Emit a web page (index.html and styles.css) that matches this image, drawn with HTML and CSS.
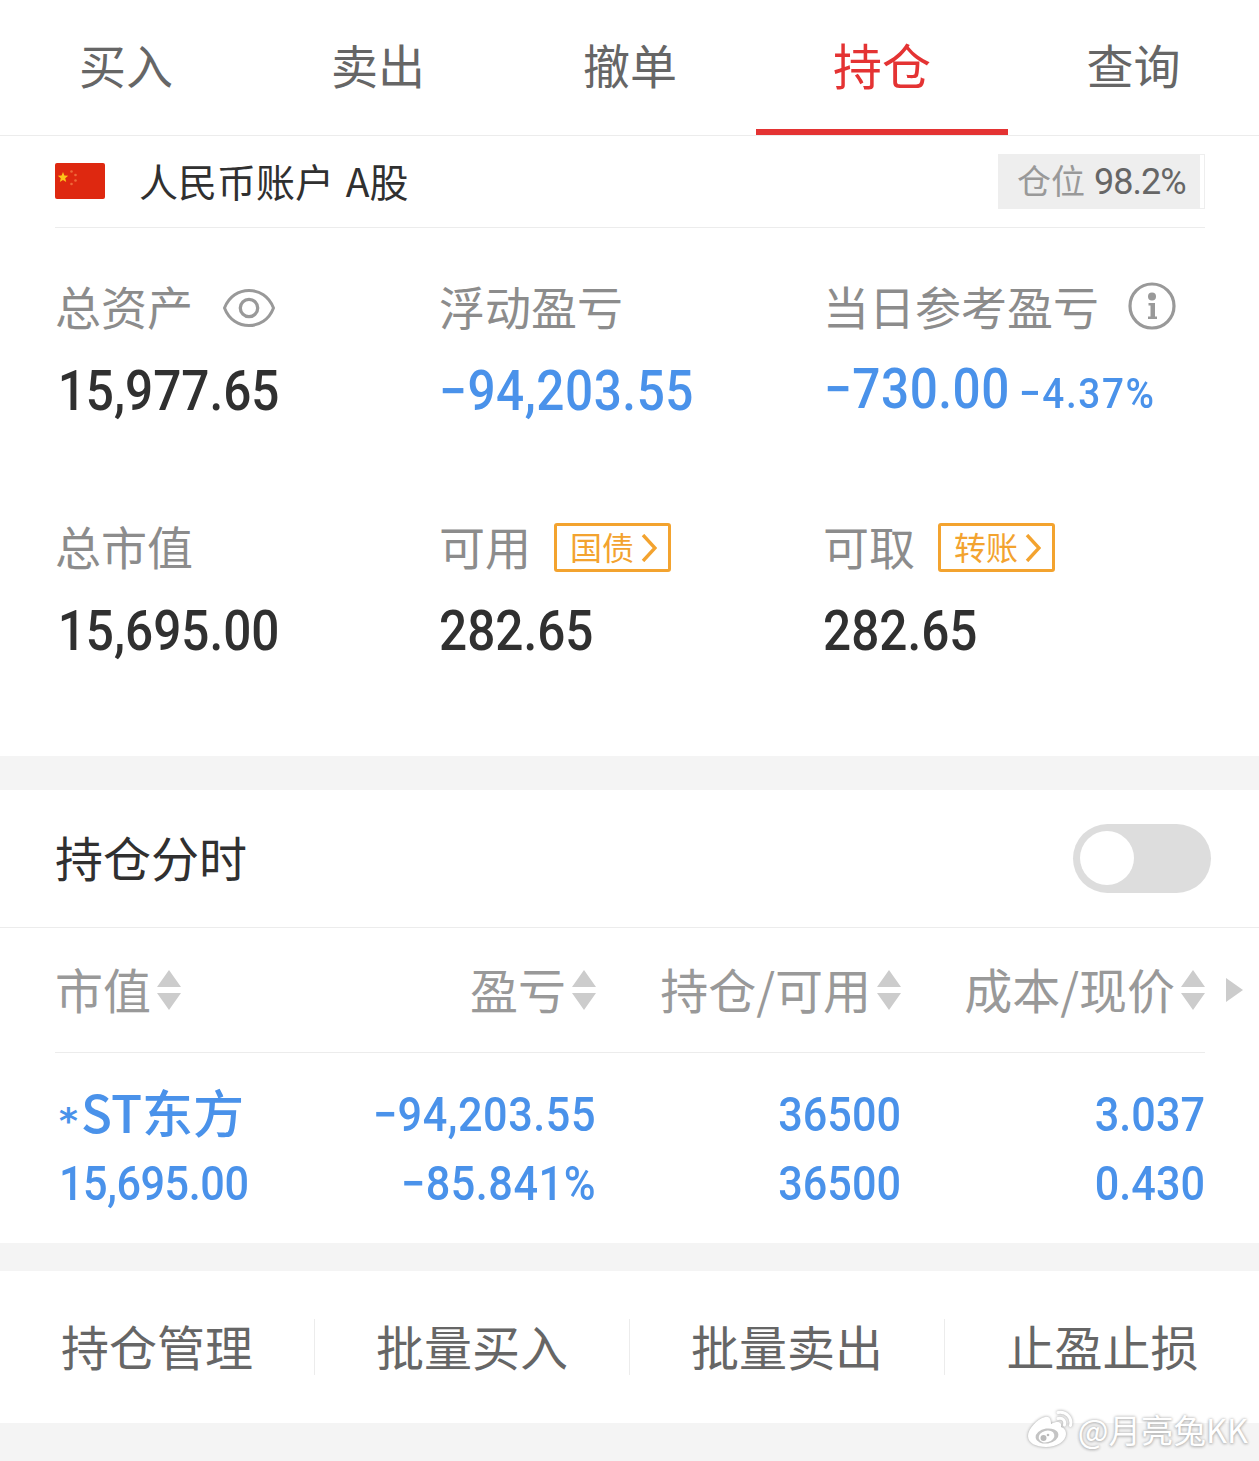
FILE: index.html
```html
<!DOCTYPE html>
<html lang="zh-CN">
<head>
    <meta charset="UTF-8">
    <title>持仓</title>
    <link rel="stylesheet" href="styles.css">
</head>
<body>
    <nav class="tabs">
        <a class="tab">买入</a>
        <a class="tab">卖出</a>
        <a class="tab">撤单</a>
        <a class="tab active">持仓</a>
        <a class="tab">查询</a>
    </nav>

    <section class="account">
        <svg class="flag" viewBox="0 0 50 36">
            <rect width="50" height="36" rx="2" fill="#de2810"/>
            <path d="M8 9l1.400 3.600 3.800.2-3 2.400 1 3.800L8 17l-3.200 2 1-3.800-3-2.400 3.800-.2z" fill="#fcc419"/>
            <g fill="#ee6a3a">
                <circle cx="16.500" cy="8.500" r="1.300"/>
                <circle cx="20.500" cy="12" r="1.300"/>
                <circle cx="20.500" cy="17.500" r="1.300"/>
                <circle cx="16.500" cy="21" r="1.300"/>
            </g>
        </svg>
        <span class="account-name">人民币账户 A股</span>
        <div class="position">
            <div class="position-fill"><span>仓位</span><b>98.2%</b></div>
        </div>
    </section>

    <section class="assets">
        <article class="asset">
            <h2>总资产
                <svg class="eye" viewBox="0 0 54 40" fill="none" stroke="#999">
                    <path d="M2.500 20C7 8 17 2.500 27 2.500S47 8 51.500 20C47 32 37 37.500 27 37.500S7 32 2.500 20z" stroke-width="3" stroke-linejoin="round"/>
                    <circle cx="27" cy="20" r="8.700" stroke-width="3.300"/>
                </svg>
            </h2>
            <p class="num indent">15,977.65</p>
        </article>
        <article class="asset">
            <h2>浮动盈亏</h2>
            <p class="num blue">−94,203.55</p>
        </article>
        <article class="asset">
            <h2>当日参考盈亏
                <svg class="info" viewBox="0 0 48 48">
                    <circle cx="24" cy="24" r="22" fill="none" stroke="#999" stroke-width="3.200"/>
                    <circle cx="24" cy="14.500" r="4" fill="#999"/>
                    <path d="M20.500 21h6.500v13.500h2v2.500h-9v-2.500h2.500v-11h-2z" fill="#999"/>
                </svg>
            </h2>
            <p class="num blue today">−730.00<small>−4.37%</small></p>
        </article>
        <article class="asset">
            <h2>总市值</h2>
            <p class="num indent">15,695.00</p>
        </article>
        <article class="asset">
            <h2>可用
                <button class="tag">国债<svg viewBox="0 0 16 28"><path d="M2 1l12 13L2 27"/></svg></button>
            </h2>
            <p class="num">282.65</p>
        </article>
        <article class="asset">
            <h2>可取
                <button class="tag">转账<svg viewBox="0 0 16 28"><path d="M2 1l12 13L2 27"/></svg></button>
            </h2>
            <p class="num">282.65</p>
        </article>
    </section>

    <section class="timeline">
        <span>持仓分时</span>
        <div class="switch"></div>
    </section>

    <section class="holdings">
        <div class="row head">
            <div>市值<svg class="sort" viewBox="0 0 24 40"><path d="M12 0l12 17H0zM0 23h24L12 40z"/></svg></div>
            <div>盈亏<svg class="sort" viewBox="0 0 24 40"><path d="M12 0l12 17H0zM0 23h24L12 40z"/></svg></div>
            <div>持仓/可用<svg class="sort" viewBox="0 0 24 40"><path d="M12 0l12 17H0zM0 23h24L12 40z"/></svg></div>
            <div>成本/现价<svg class="sort" viewBox="0 0 24 40"><path d="M12 0l12 17H0zM0 23h24L12 40z"/></svg></div>
            <svg class="more" viewBox="0 0 17 24"><path d="M0 0l17 12L0 24z"/></svg>
        </div>
        <div class="row stock">
            <div>
                <p class="name"><span class="star">*</span>ST东方</p>
                <p>15,695.00</p>
            </div>
            <div>
                <p class="loss">−94,203.55</p>
                <p class="loss">−85.841%</p>
            </div>
            <div>
                <p>36500</p>
                <p>36500</p>
            </div>
            <div>
                <p>3.037</p>
                <p>0.430</p>
            </div>
        </div>
    </section>

    <section class="actions">
        <a>持仓管理</a>
        <a>批量买入</a>
        <a>批量卖出</a>
        <a>止盈止损</a>
    </section>

    <footer class="bottom">
        <div class="watermark">
            <svg viewBox="0 0 46 38">
                <path d="M18 7C10 9 1 19 1 26c0 7 8 11 18 11 11 0 20-6 20-13 0-4-2-6-5-7 1-4-2-7-10-3 0-4-1-8-6-7z" fill="#fff"/>
                <ellipse cx="20" cy="26" rx="11.500" ry="7.500" fill="#c4c4c4" transform="rotate(-8 20 26)"/>
                <ellipse cx="19.500" cy="26.500" rx="8" ry="5.800" fill="#fff" transform="rotate(-15 19.500 26.500)"/>
                <circle cx="16.500" cy="28" r="3" fill="#bbb"/>
                <circle cx="21" cy="25" r="1.300" fill="#bbb"/>
                <path d="M31 8.500c5-1 7.500 2 6.500 6.500M31 2.500c8-1.500 14.500 5 12.500 13" fill="none" stroke="#fff" stroke-width="3" stroke-linecap="round"/>
            </svg>
            <span>@月亮兔KK</span>
        </div>
    </footer>
</body>
</html>
```
FILE: styles.css
```css
* {
    box-sizing: border-box;
}
body {
    margin: 0;
    background: #fff;
    color: #303030;
    font-family: "Noto Sans CJK SC", sans-serif;
}
h2, p {
    margin: 0;
    font-weight: 400;
}
svg {
    display: block;
    flex: none;
}

.tabs {
    display: grid;
    grid-template-columns: repeat(4, 252px) 1fr;
    height: 136px;
    border-bottom: 1px solid #ececec;
}
.tab {
    height: 135px;
    line-height: 127px;
    text-align: center;
    font-size: 47px;
    color: #666;
}
.tab.active {
    font-size: 49px;
    color: #e43333;
    border-bottom: 6px solid #e43333;
}

.account {
    display: flex;
    align-items: center;
    height: 92px;
    margin: 0 54px 0 55px;
    border-bottom: 1px solid #ececec;
}
.flag {
    width: 50px;
    height: 36px;
    margin-bottom: 2px;
}
.account-name {
    flex: 1;
    margin-left: 34px;
    padding-bottom: 3px;
    font-size: 39px;
    line-height: 56px;
    word-spacing: 3px;
}
.position {
    width: 207px;
    height: 55px;
    border: 1px solid #eee;
}
.position-fill {
    display: flex;
    align-items: center;
    width: 201px;
    height: 53px;
    padding-left: 18px;
    background: #eee;
    font-size: 34px;
    color: #999;
}
.position-fill span {
    padding-bottom: 4px;
}
.position-fill b {
    margin-left: 9px;
    font: 400 36px Roboto, sans-serif;
    letter-spacing: -1px;
    color: #666;
}

.assets {
    display: grid;
    grid-template-columns: repeat(3, 384px);
    grid-auto-rows: 240px;
    height: 528px;
    padding: 40px 0 0 55px;
}
.asset h2 {
    display: flex;
    align-items: center;
    height: 80px;
    padding-bottom: 6px;
    font-size: 46px;
    color: #8c8c8c;
}
.eye {
    width: 54px;
    height: 40px;
    margin: 6px 0 0 29px;
}
.info {
    width: 48px;
    height: 48px;
    margin: 2px 0 0 29px;
}
/* Roboto squeezed to narrow, evenly spaced figures */
.num {
    height: 84px;
    line-height: 86px;
    font-family: Roboto, sans-serif;
    font-size: 55px;
    font-weight: 500;
    letter-spacing: 0;
    white-space: nowrap;
    transform: scaleX(0.9);
    transform-origin: left;
}
.indent {
    padding-left: 3px;
}
.blue {
    letter-spacing: 0.6px;
    color: #4a92ea;
}
.today {
    padding-left: 1px;
    line-height: 82px;
}
.today small {
    margin-left: 10px;
    font-size: 43px;
    letter-spacing: 1.8px;
}
.tag {
    display: flex;
    align-items: center;
    width: 117px;
    height: 49px;
    margin: 4px 0 0 23px;
    padding: 0 0 2px 13px;
    border: 3px solid #f3a32f;
    border-radius: 3px;
    background: #fff;
    font: 32px "Noto Sans CJK SC", sans-serif;
    color: #f3a32f;
}
.tag svg {
    width: 16px;
    height: 28px;
    margin: 3px 0 0 7px;
    fill: none;
    stroke: #f3a32f;
    stroke-width: 3.4;
}

.timeline {
    display: flex;
    align-items: center;
    justify-content: space-between;
    height: 172px;
    padding: 0 48px 0 55px;
    border-top: 34px solid #f4f4f4;
    border-bottom: 1px solid #ececec;
    font-size: 48px;
}
.timeline span {
    padding-bottom: 5px;
}
.switch {
    width: 138px;
    height: 69px;
    padding: 7px;
    border-radius: 35px;
    background: #ddd;
}
.switch::before {
    content: "";
    display: block;
    width: 54px;
    height: 54px;
    border-radius: 50%;
    background: #fff;
}

.holdings {
    height: 315px;
    padding-left: 55px;
}
.row {
    display: grid;
    grid-template-columns: 237px 304px 305px 304px;
    width: 1150px;
}
.head {
    position: relative;
    height: 125px;
    border-bottom: 1px solid #ececec;
    font-size: 48px;
    color: #999;
}
.head div {
    display: flex;
    align-items: center;
    justify-content: flex-end;
    padding-bottom: 5px;
    white-space: nowrap;
}
.head div:first-child {
    justify-content: flex-start;
}
.sort {
    width: 24px;
    height: 40px;
    margin: 5px 0 0 6px;
    fill: #ccc;
}
/* sits in the page margin, right of the table */
.more {
    position: absolute;
    left: 1171px;
    top: 50px;
    width: 17px;
    height: 24px;
    fill: #ccc;
}
.stock {
    padding-top: 27px;
    font-family: Roboto, sans-serif;
    font-size: 48px;
    text-align: right;
    color: #4a92ea;
}
.stock div:first-child {
    padding-left: 4px;
    text-align: left;
}
.stock p {
    height: 69px;
    line-height: 69px;
    font-weight: 500;
    white-space: nowrap;
    transform: scaleX(0.9);
    transform-origin: right;
}
.stock div:first-child p {
    letter-spacing: -0.5px;
    transform-origin: left;
}
.stock .loss {
    letter-spacing: 0.6px;
}
.stock div:first-child .name {
    line-height: 63px;
    font-family: "Noto Sans CJK SC", sans-serif;
    font-size: 51px;
    letter-spacing: 0;
    transform: none;
}
.star {
    display: inline-block;
    width: 22px;
    font: bold 36px "DejaVu Sans", sans-serif;
}

.actions {
    display: grid;
    grid-template-columns: repeat(4, 315px);
    align-items: center;
    height: 180px;
    overflow: hidden;
    border-top: 28px solid #f4f4f4;
}
.actions a {
    height: 56px;
    line-height: 53px;
    border-right: 1px solid #ececec;
    text-align: center;
    font-size: 48px;
    color: #666;
}
.actions a:last-child {
    border: 0;
}

.bottom {
    position: relative;
    height: 38px;
    background: #f4f4f4;
}
.watermark {
    position: absolute;
    right: 11px;
    top: -14px;
    display: flex;
    align-items: center;
    height: 40px;
    font-size: 32.5px;
    line-height: 40px;
    color: #fff;
    text-shadow: 0 0 3px #aaa, 0 1px 3px #bbb;
}
.watermark span {
    padding-bottom: 1px;
}
.watermark svg {
    width: 46px;
    height: 38px;
    margin-right: 5px;
    filter: drop-shadow(0 0 1.5px #999);
}
```
